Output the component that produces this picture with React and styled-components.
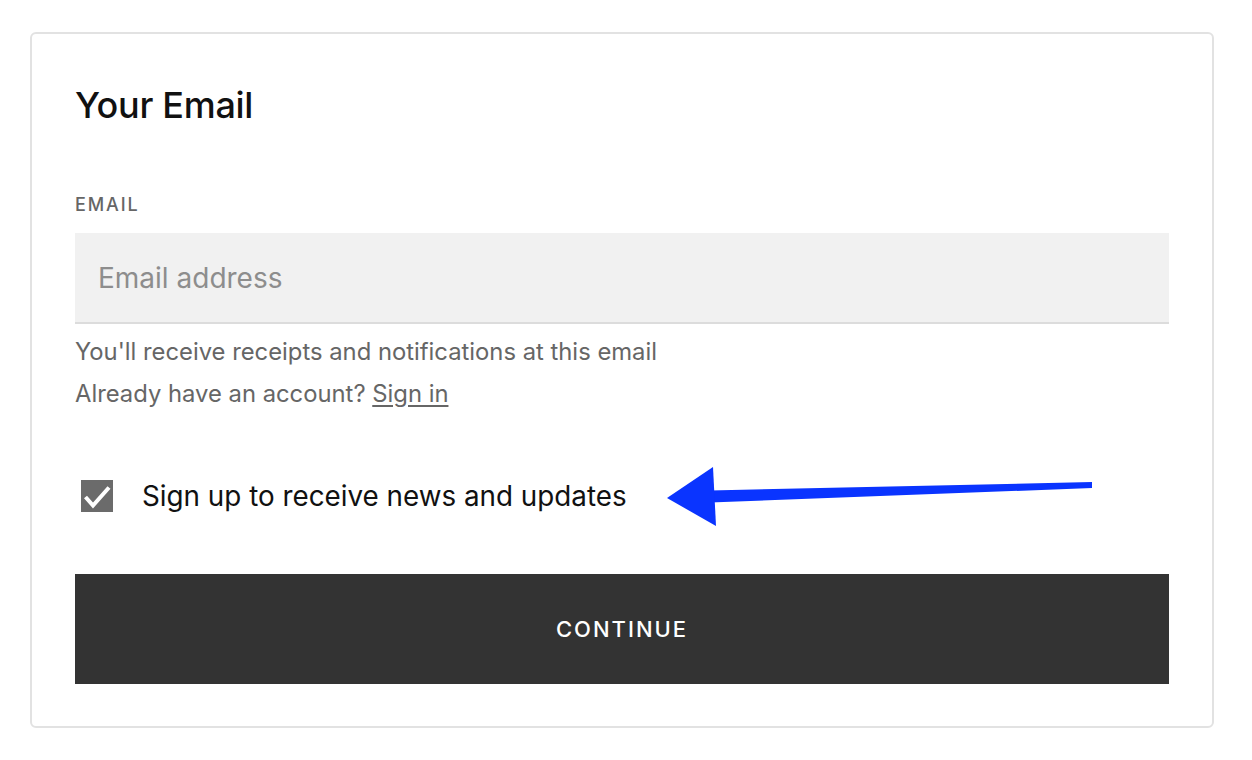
import styled, { createGlobalStyle } from 'styled-components'

const GlobalStyle = createGlobalStyle`
  * { box-sizing: border-box; }
  body {
    margin: 0;
    background: #fff;
    font-family: Inter, "Liberation Sans", sans-serif;
    -webkit-font-smoothing: antialiased;
  }
`;

const Page = styled.div`
  padding: 32px 0 0 30px;
`;

const Card = styled.div`
  position: relative;
  width: 1184px;
  height: 696px;
  border: 2px solid #e2e2e2;
  border-radius: 6px;
  padding: 49px 43px 42px;
  display: flex;
  flex-direction: column;
`;

const Title = styled.h1`
  margin: 0;
  font-size: 36px;
  line-height: 44px;
  font-weight: 500;
  color: #111;
  letter-spacing: -0.3px;
`;

const Label = styled.label`
  margin-top: 68px;
  font-size: 18px;
  line-height: 20px;
  font-weight: 500;
  letter-spacing: 1.9px;
  color: #666;
  text-transform: uppercase;
`;

const Input = styled.input`
  margin-top: 18px;
  height: 91px;
  border: none;
  border-bottom: 2px solid #dcdcdc;
  background: #f1f1f1;
  padding: 0 23px;
  font-family: inherit;
  font-size: 28px;
  color: #222;
  outline: none;
  &::placeholder {
    color: #8d8d8d;
  }
`;

const Help = styled.p`
  margin: ${(p) => p.$first ? '7px' : '0'} 0 0;
  font-size: 23.8px;
  line-height: 42px;
  color: #666;
`;

const SignIn = styled.a`
  color: #666;
  text-decoration: underline;
  text-underline-offset: 3px;
`;

const CheckRow = styled.label`
  margin-top: 64px;
  display: flex;
  align-items: center;
  gap: 29px;
  padding-left: 6px;
  font-size: 27.8px;
  color: #111;
`;

const Box = styled.span`
  width: 32px;
  height: 32px;
  background: #6b6b6b;
  display: flex;
`;

const Button = styled.button`
  margin-top: auto;
  height: 110px;
  border: none;
  background: #333;
  color: #fff;
  font-family: inherit;
  font-size: 22px;
  font-weight: 500;
  letter-spacing: 2px;
  text-transform: uppercase;
`;

const Arrow = styled.svg`
  position: absolute;
  left: 634px;
  top: 430px;
  overflow: visible;
`;

export default function App() {
  return (
    <Page>
      <GlobalStyle />
      <Card>
        <Title>Your Email</Title>
        <Label>Email</Label>
        <Input type="email" placeholder="Email address" />
        <Help $first>You'll receive receipts and notifications at this email</Help>
        <Help>Already have an account? <SignIn href="#">Sign in</SignIn></Help>
        <CheckRow>
          <Box>
            <svg width="32" height="32" viewBox="0 0 32 32">
              <path d="M4.5 17l7.5 8.5L28 7.5" fill="none" stroke="#fff" strokeWidth="4" />
            </svg>
          </Box>
          Sign up to receive news and updates
        </CheckRow>
        <Button>Continue</Button>
        <Arrow width="430" height="64" viewBox="0 0 430 64">
          <polygon points="44,26.5 426,18 426,24 44,38.5" fill="#0a34ff" />
          <polygon points="1,34 47,3 50,62" fill="#0a34ff" />
        </Arrow>
      </Card>
    </Page>
  );
}
